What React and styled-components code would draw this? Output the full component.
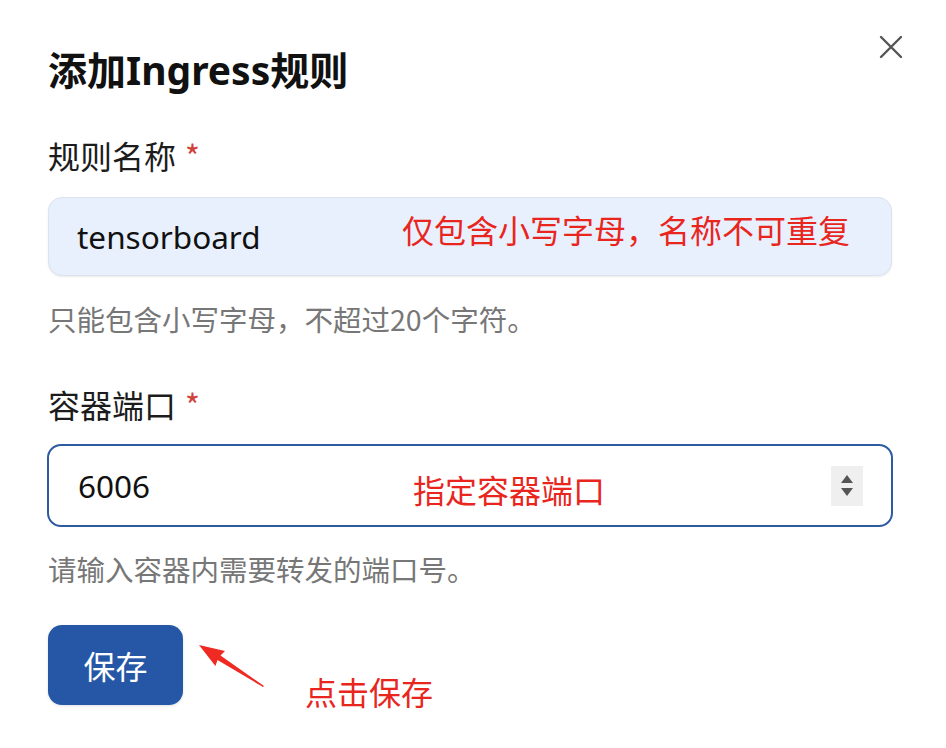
import styled, { createGlobalStyle } from 'styled-components'
import { useState } from 'react'

const GlobalStyle = createGlobalStyle`
  html, body {
    margin: 0;
    padding: 0;
    background: #ffffff;
  }
  body {
    font-family: "Noto Sans", "Noto Sans CJK SC", sans-serif;
  }
`

const Dialog = styled.div`
  width: 946px;
  height: 748px;
  box-sizing: border-box;
  padding: 46px 54px 0 48px;
  background: #fff;
  overflow: hidden;
`

const Header = styled.div`
  display: flex;
  align-items: center;
  justify-content: space-between;
  height: 48px;
`

const Title = styled.h1`
  margin: 0;
  font-size: 39px;
  line-height: 48px;
  font-weight: 700;
  color: #111;
  font-family: "Noto Sans", "Noto Sans CJK SC", sans-serif;
`

const CloseButton = styled.button`
  border: 0;
  background: transparent;
  padding: 0;
  width: 28px;
  height: 28px;
  margin-right: -13px;
  margin-top: -46px;
  display: flex;
  align-items: center;
  justify-content: center;
  cursor: pointer;
  color: #555;
`

const Field = styled.div`
  display: flex;
  flex-direction: column;
  margin-top: ${(p) => p.$top}px;
`

const Label = styled.label`
  font-size: 32px;
  line-height: 40px;
  color: #1c1c1c;
  margin-bottom: ${(p) => p.$gap}px;
  font-family: "Noto Sans CJK SC", sans-serif;
  span {
    color: #d0413a;
    margin-left: 9px;
  }
`

const InputShell = styled.div`
  position: relative;
  display: flex;
  align-items: center;
  box-sizing: border-box;
  height: ${(p) => p.$height}px;
  margin-left: ${(p) => (p.$focused ? -1 : 0)}px;
  margin-right: ${(p) => (p.$focused ? -1 : 0)}px;
  border-radius: 14px;
  background: ${(p) => (p.$filled ? '#e8f0fe' : '#fff')};
  border: ${(p) => (p.$focused ? '2px solid #2d5aa0' : '1px solid #dde3ed')};
  box-shadow: ${(p) => (p.$focused ? 'none' : '0 1px 2px rgba(0,0,0,0.08)')};
  padding: 0 28px 0 ${(p) => (p.$focused ? 29 : 28)}px;
`

const TextInput = styled.input`
  flex: 1;
  min-width: 0;
  border: 0;
  outline: none;
  background: transparent;
  font-size: 31.5px;
  color: #111;
  padding: 0;
  font-family: "Noto Sans", "Noto Sans CJK SC", sans-serif;
`

const Note = styled.div`
  position: absolute;
  left: ${(p) => p.$left}px;
  top: ${(p) => p.$top}px;
  font-size: 32px;
  line-height: 40px;
  color: #e8261e;
  white-space: nowrap;
  pointer-events: none;
  font-family: "Noto Sans CJK SC", sans-serif;
`

const Spinner = styled.div`
  width: 32px;
  height: 40px;
  background: #efefef;
  display: flex;
  flex-direction: column;
  align-items: center;
  justify-content: center;
  gap: 5px;
`

const Arrow = styled.div`
  width: 0;
  height: 0;
  border-left: 6px solid transparent;
  border-right: 6px solid transparent;
  ${(p) =>
    p.$up
      ? 'border-bottom: 8px solid #555;'
      : 'border-top: 8px solid #555;'}
`

const Hint = styled.div`
  margin-top: ${(p) => p.$gap}px;
  font-size: 28.5px;
  line-height: 36px;
  color: #777;
  font-family: "Noto Sans CJK SC", sans-serif;
`

const Footer = styled.div`
  position: relative;
  margin-top: 38px;
  height: 80px;
`

const SaveButton = styled.button`
  width: 135px;
  height: 80px;
  border: 0;
  border-radius: 14px;
  background: #2557a6;
  color: #fff;
  font-size: 32px;
  font-family: "Noto Sans CJK SC", sans-serif;
  box-shadow: 0 1px 3px rgba(0,0,0,0.12);
  cursor: pointer;
`

const Pointer = styled.svg`
  position: absolute;
  left: 148px;
  top: 14px;
`

const App = () => {
  const [name, setName] = useState('tensorboard')
  const [port, setPort] = useState('6006')

  return (
    <>
      <GlobalStyle />
      <Dialog>
        <Header>
          <Title>添加Ingress规则</Title>
          <CloseButton aria-label='close'>
            <svg width='24' height='24' viewBox='0 0 24 24'>
              <path
                d='M2 2 L22 22 M22 2 L2 22'
                stroke='currentColor'
                strokeWidth='2.4'
                strokeLinecap='round'
              />
            </svg>
          </CloseButton>
        </Header>

        <Field $top={41}>
          <Label $gap={22}>
            规则名称<span>*</span>
          </Label>
          <InputShell $height={79} $filled>
            <TextInput value={name} onChange={(e) => setName(e.target.value)} />
            <Note $left={353} $top={11}>仅包含小写字母，名称不可重复</Note>
          </InputShell>
          <Hint $gap={25}>只能包含小写字母，不超过20个字符。</Hint>
        </Field>

        <Field $top={47}>
          <Label $gap={20}>
            容器端口<span>*</span>
          </Label>
          <InputShell $height={83} $focused>
            <TextInput value={port} onChange={(e) => setPort(e.target.value)} />
            <Note $left={364} $top={23}>指定容器端口</Note>
            <Spinner>
              <Arrow $up />
              <Arrow />
            </Spinner>
          </InputShell>
          <Hint $gap={24}>请输入容器内需要转发的端口号。</Hint>
        </Field>

        <Footer>
          <SaveButton>保存</SaveButton>
          <Pointer width='72' height='50' viewBox='0 0 72 50'>
            <polygon points='3,6 29,12 24.5,16.5 68,47 67,48 21.5,21 19.4,27' fill='#ee2a22' />
          </Pointer>
          <Note $left={257} $top={46}>点击保存</Note>
        </Footer>
      </Dialog>
    </>
  )
}

export default App
